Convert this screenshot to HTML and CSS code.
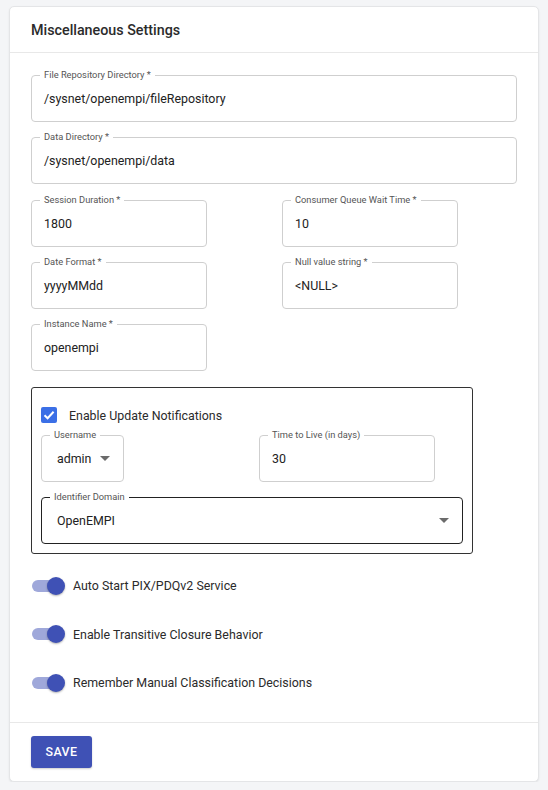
FILE: index.html
```html
<!DOCTYPE html>
<html>
<head>
<meta charset="utf-8">
<link rel="stylesheet" href="styles.css">
</head>
<body>
<div class="card">
  <div class="card-header">Miscellaneous Settings</div>
  <div class="card-body">
    <div class="field"><span class="label">File Repository Directory *</span><span class="value">/sysnet/openempi/fileRepository</span></div>
    <div class="field"><span class="label">Data Directory *</span><span class="value">/sysnet/openempi/data</span></div>
    <div class="row">
      <div class="field half"><span class="label">Session Duration *</span><span class="value">1800</span></div>
      <div class="field half"><span class="label">Consumer Queue Wait Time *</span><span class="value">10</span></div>
    </div>
    <div class="row">
      <div class="field half"><span class="label">Date Format *</span><span class="value">yyyyMMdd</span></div>
      <div class="field half"><span class="label">Null value string *</span><span class="value">&lt;NULL&gt;</span></div>
    </div>
    <div class="row last-row">
      <div class="field half"><span class="label">Instance Name *</span><span class="value">openempi</span></div>
    </div>

    <div class="group">
      <label class="check-row">
        <span class="checkbox"><svg viewBox="0 0 16 16" width="16" height="16"><path d="M3.5 8.2 L6.6 11.2 L12.6 4.8" fill="none" stroke="#fff" stroke-width="2"/></svg></span>
        <span class="check-text">Enable Update Notifications</span>
      </label>
      <div class="group-row">
        <div class="field select-small"><span class="label">Username</span><span class="value">admin</span><span class="arrow"></span></div>
        <div class="field half"><span class="label">Time to Live (in days)</span><span class="value">30</span></div>
      </div>
      <div class="field dark"><span class="label">Identifier Domain</span><span class="value">OpenEMPI</span><span class="arrow"></span></div>
    </div>

    <div class="toggles">
      <div class="toggle-row"><span class="switch"><span class="track"></span><span class="thumb"></span></span><span class="toggle-text">Auto Start PIX/PDQv2 Service</span></div>
      <div class="toggle-row"><span class="switch"><span class="track"></span><span class="thumb"></span></span><span class="toggle-text">Enable Transitive Closure Behavior</span></div>
      <div class="toggle-row"><span class="switch"><span class="track"></span><span class="thumb"></span></span><span class="toggle-text">Remember Manual Classification Decisions</span></div>
    </div>
  </div>
  <div class="card-footer">
    <button class="save">SAVE</button>
  </div>
</div>
</body>
</html>
```

FILE: styles.css
```css
* { box-sizing: border-box; }
body {
  margin: 0;
  background: #f4f5f7;
  font-family: Roboto, "Liberation Sans", Arial, sans-serif;
  color: #222;
}
.card {
  margin: 6px 0 0 9px;
  width: 530px;
  background: #fff;
  border: 1px solid #e4e5e7;
  border-radius: 5px;
  box-shadow: 0 1px 2px rgba(0,0,0,0.08);
}
.card-header {
  height: 46px;
  display: flex;
  align-items: center;
  padding-left: 21px;
  font-size: 14.3px;
  font-weight: 500;
  color: #2b2b2b;
  border-bottom: 1px solid #e8e8e8;
}
.card-body {
  padding: 22px 21px 15px 21px;
  display: flex;
  flex-direction: column;
  align-items: flex-start;
}
.card-body > .field { width: 486px; }
.field {
  position: relative;
  height: 47px;
  border: 1px solid #cfcfcf;
  border-radius: 4px;
  display: flex;
  align-items: center;
  padding-left: 12px;
  margin-bottom: 15.25px;
}
.label {
  position: absolute;
  top: -7px;
  left: 8px;
  padding: 0 4px;
  background: #fff;
  font-size: 9.3px;
  line-height: 12px;
  color: #555;
}
.value {
  font-size: 12.4px;
  color: #222;
}
.row {
  display: flex;
  gap: 75px;
}
.half { width: 176px; }
.last-row .field { margin-bottom: 16px; }

.group {
  width: 442px;
  border: 1px solid #333;
  border-radius: 3px;
  padding: 17px 9px 9px 9px;
}
.check-row {
  display: flex;
  align-items: center;
  height: 20px;
  margin-bottom: 10px;
}
.checkbox {
  width: 16px;
  height: 16px;
  border-radius: 2px;
  background: #3b6fe6;
  display: flex;
  margin-right: 12px;
}
.check-text { font-size: 12.4px; color: #2b2b2b; }
.group-row {
  display: flex;
  gap: 135px;
}
.select-small {
  width: 83px;
  padding-left: 15px;
}
.arrow {
  position: absolute;
  width: 0; height: 0;
  border-left: 5px solid transparent;
  border-right: 5px solid transparent;
  border-top: 5px solid #6b6b6b;
  top: 20px;
  right: 13px;
}
.dark {
  border-color: #222;
  margin-bottom: 0;
  padding-left: 15px;
}

.toggles {
  margin-top: 7px;
  align-self: stretch;
}
.toggle-row {
  height: 48.5px;
  display: flex;
  align-items: center;
}
.switch {
  position: relative;
  width: 35px;
  height: 18px;
  margin-left: 1px;
  margin-right: 6px;
}
.track {
  position: absolute;
  left: 0;
  top: 3px;
  width: 28px;
  height: 12px;
  border-radius: 6px;
  background: #9fa8da;
}
.thumb {
  position: absolute;
  left: 15px;
  top: 0;
  width: 18px;
  height: 18px;
  border-radius: 50%;
  background: #3f51b5;
  box-shadow: 0 1px 2px rgba(0,0,0,0.3);
}
.toggle-text { font-size: 12.4px; color: #2b2b2b; }

.card-footer {
  border-top: 1px solid #e8e8e8;
  padding: 13px 21px 13px 21px;
}
.save {
  width: 61px;
  height: 32px;
  border: none;
  border-radius: 3px;
  background: #3f51b5;
  color: #fff;
  font-family: Roboto, "Liberation Sans", Arial, sans-serif;
  font-size: 12.4px;
  font-weight: 500;
  letter-spacing: 0.5px;
  box-shadow: 0 1px 2px rgba(0,0,0,0.2);
}
```
